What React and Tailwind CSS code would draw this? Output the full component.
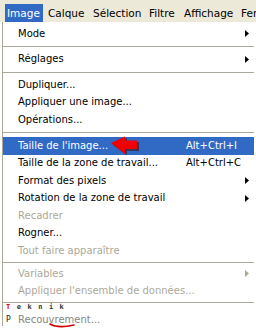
const font = { fontFamily: '"DejaVu Sans", Tahoma, sans-serif' }
const mono = { fontFamily: '"DejaVu Sans Mono", monospace' }

const menubar = [
  { label: 'Image', w: 'w-[38px]', pl: 'pl-[2px]', active: true },
  { label: 'Calque', w: 'w-[45px]', pl: 'pl-[5px]' },
  { label: 'Sélection', w: 'w-[56px]', pl: 'pl-[5px]' },
  { label: 'Filtre', w: 'w-[35px]', pl: 'pl-[5px]' },
  { label: 'Affichage', w: 'w-[57px]', pl: 'pl-[5px]' },
  { label: 'Fenêtre', w: 'w-[60px]', pl: 'pl-[5px]' },
]

const items = [
  { label: 'Mode', sub: true },
  { sep: 'h-[8px]' },
  { label: 'Réglages', sub: true },
  { sep: 'h-[8px]' },
  { label: 'Dupliquer...' },
  { label: 'Appliquer une image...' },
  { label: 'Opérations...' },
  { sep: 'h-[8.5px]' },
  { label: "Taille de l'image...", key: 'Alt+Ctrl+I', active: true },
  { label: 'Taille de la zone de travail...', key: 'Alt+Ctrl+C' },
  { label: 'Format des pixels', sub: true },
  { label: 'Rotation de la zone de travail', sub: true },
  { label: 'Recadrer', disabled: true },
  { label: 'Rogner...' },
  { label: 'Tout faire apparaître', disabled: true },
  { sep: 'h-[5.5px]' },
  { label: 'Variables', sub: true, disabled: true },
  { label: "Appliquer l'ensemble de données...", disabled: true },
]

function Arrow({ color }) {
  return (
    <svg width="4" height="7" viewBox="0 0 4 7">
      <path d="M0 0L4 3.5L0 7Z" fill={color} />
    </svg>
  )
}

function Row({ item }) {
  const color = item.active ? 'text-white' : item.disabled ? 'text-[#aca899]' : 'text-black'
  return (
    <div
      className={`relative flex h-[17.5px] items-center pl-[15px] ${item.active ? 'bg-[#316ac5]' : ''} ${color}`}
    >
      <span className="w-[168px] whitespace-nowrap">{item.label}</span>
      <span className="w-[59px] whitespace-nowrap">{item.key}</span>
      {item.sub && <Arrow color={item.disabled ? '#aca899' : '#000'} />}
      {item.active && (
        <svg className="absolute left-[105px] top-[-1px]" width="34" height="20" viewBox="0 0 34 20">
          <path d="M5 9L19 2V6H31V15H19V19Z" fill="#3a1010" opacity="0.6" />
          <path d="M3 7L17 0.5V4.5H29V13H17V18Z" fill="#f00000" />
        </svg>
      )}
    </div>
  )
}

export default function App() {
  return (
    <div className="h-[328px] w-[256px] overflow-hidden bg-white text-[10px] leading-none" style={font}>
      {/* Menu bar */}
      <div className="flex h-[22px] items-end bg-[#ece9d8] pl-[5px]">
        {menubar.map((m) => (
          <div
            key={m.label}
            className={`flex h-[18px] shrink-0 items-center whitespace-nowrap text-[10.5px] ${m.w} ${m.pl} ${
              m.active ? 'bg-[#316ac5] text-white' : 'text-black'
            }`}
          >
            {m.label}
          </div>
        ))}
      </div>

      {/* Dropdown */}
      <div className="ml-[2px] mr-[2px] h-[304px] border-l border-[#aca899] pt-[3px]">
        {items.map((item, i) =>
          item.sep ? (
            <div key={i} className={`flex items-center ${item.sep}`}>
              <div className="h-px w-full bg-[#aca899]" />
            </div>
          ) : (
            <Row key={i} item={item} />
          )
        )}

        {/* last separator + watermark */}
        <div className="relative h-[11.5px] pt-[2px]">
          <div className="h-px w-full bg-[#aca899]" />
          <div className="mt-[1px] flex gap-[6.5px] pl-[3px] text-[7px] font-bold" style={mono}>
            <span className="text-[#d00000]">T</span>
            <span className="text-[#333]">e</span>
            <span className="text-[#333]">k</span>
            <span className="text-[#333]">n</span>
            <span className="text-[#333]">i</span>
            <span className="text-[#333]">k</span>
          </div>
        </div>
        <div className="relative flex h-[17.5px] items-center pl-[15px] text-[#8a8680]">
          <span className="whitespace-nowrap">Recouvrement...</span>
          <span className="absolute left-[3px] top-[4px] text-[8px] text-[#222]" style={mono}>P</span>
          <svg className="absolute left-[46px] top-[11px]" width="26" height="5" viewBox="0 0 26 5">
            <path d="M1 1C6 4 14 4.5 25 2" stroke="#d00000" strokeWidth="1.6" fill="none" strokeLinecap="round" />
          </svg>
        </div>
      </div>
    </div>
  )
}
